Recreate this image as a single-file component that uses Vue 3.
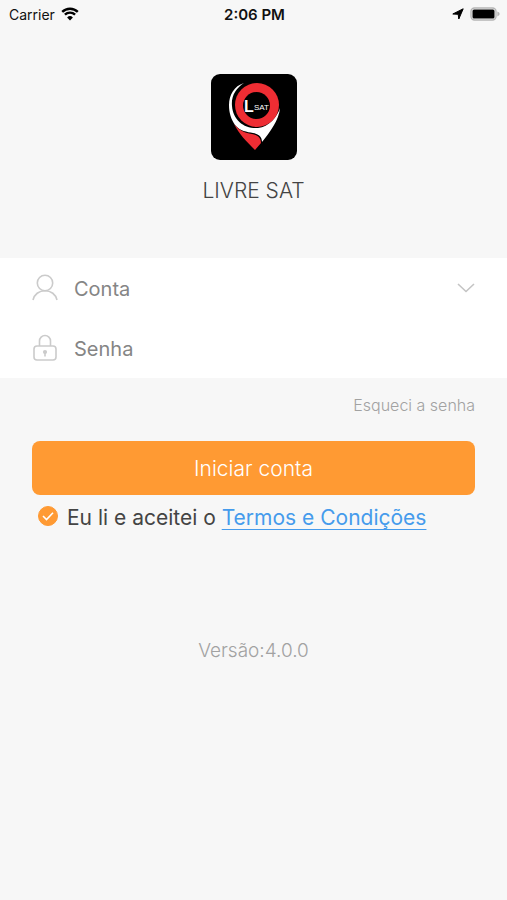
<script setup>
import { ref } from 'vue'

const account = ref('')
const password = ref('')
const accepted = ref(true)
</script>

<template>
  <div class="screen">
    <header class="status">
      <div class="side">
        <span>Carrier</span>
        <svg class="wifi" viewBox="0 0 18 14" aria-hidden="true">
          <path d="M1.2 4.9a11.2 11.2 0 0 1 15.6 0" />
          <path d="M3.9 7.7a7.3 7.3 0 0 1 10.2 0" />
          <path class="dot" d="M9 13.4 6.1 10.4a4.2 4.2 0 0 1 5.8 0z" />
        </svg>
      </div>
      <span class="time">2:06 PM</span>
      <div class="side end">
        <svg class="arrow" viewBox="0 0 12 12" aria-hidden="true">
          <path d="M11.200.8 6.800 11 6.200 6.300.8 6z" />
        </svg>
        <svg class="battery" viewBox="0 0 30 14" aria-hidden="true">
          <rect class="case" x="1" y="1" width="25" height="12" rx="3.5" />
          <rect x="2.500" y="2.500" width="22" height="9" rx="1.500" />
          <path class="cap" d="M27.3 4.6q2.4.9 2.4 2.4t-2.4 2.4z" />
        </svg>
      </div>
    </header>

    <main>
      <section class="brand">
        <svg class="logo" viewBox="0 0 86 86" aria-hidden="true">
          <rect width="86" height="86" rx="9" />
          <path fill="#fff" d="M33 9C23 12 18 21 18 31c0 8 2 14 6 20 5 6 12 7 18 8 6 1 9 4 9 9 8-10 17-22 18-34-3 9-11 19-22 20-14 1-25-8-26-22-1-10 4-18 12-23z" />
          <path fill="#ee2d33" d="M23 50c5 10 12 17 21 26l6-7c0-5-3-8-9-9-7-1-12-3-18-10z" />
          <circle cx="46" cy="31" r="22" fill="#ee2d33" />
          <circle cx="45.500" cy="31.500" r="13.500" />
          <text class="big" x="33" y="38">L</text>
          <text class="small" x="43" y="36">SAT</text>
        </svg>
        <h1>LIVRE SAT</h1>
      </section>

      <form @submit.prevent>
        <div class="fields">
          <div class="row">
            <label for="account" aria-label="Conta">
              <svg class="icon" viewBox="0 0 26 28" aria-hidden="true">
                <circle cx="13" cy="9" r="7.700" />
                <path d="M1 26c1.200-5.600 6-9.300 12-9.300S23.800 20.400 25 26" />
              </svg>
            </label>
            <input id="account" v-model="account" type="text" placeholder="Conta" />
            <button class="more" type="button" aria-label="Contas">
              <svg viewBox="0 0 18 10" aria-hidden="true"><path d="m1 1 8 7.500L17 1" /></svg>
            </button>
          </div>
          <div class="row">
            <label for="password" aria-label="Senha">
              <svg class="icon" viewBox="0 0 26 28" aria-hidden="true">
                <rect x="2" y="12" width="22" height="14" rx="3" />
                <path d="M7.500 12V7a5.500 5.500 0 0 1 11 0v5" />
                <circle class="key" cx="13" cy="18" r="1.300" />
                <path d="M13 19v3.500" />
              </svg>
            </label>
            <input id="password" v-model="password" type="password" placeholder="Senha" />
          </div>
        </div>

        <div class="actions">
          <a class="forgot" href="#">Esqueci a senha</a>
          <button class="login" type="submit">Iniciar conta</button>
          <div class="agree">
            <span class="tick">
              <input id="terms" v-model="accepted" type="checkbox" />
              <svg v-show="accepted" viewBox="0 0 20 20" aria-hidden="true"><path d="m5 10 3.500 3.500 6.500-6.800" /></svg>
            </span>
            <p><label for="terms">Eu li e aceitei o</label> <a href="#">Termos e Condições</a></p>
          </div>
        </div>
      </form>

      <p class="version">Versão:4.0.0</p>
    </main>
  </div>
</template>

<style>
body {
  background: #f7f7f7;
}
</style>

<style scoped>
.screen {
  min-height: 100vh;
  background: #f7f7f7;
  color: #444;
  font-family: Inter, "Liberation Sans", sans-serif;
}
.status {
  display: grid;
  grid-template-columns: 1fr auto 1fr;
  align-items: center;
  height: 28px;
  padding: 0 7px 0 9px;
  color: #111;
  font-size: 14px;
}
.side {
  display: flex;
  align-items: center;
  gap: 6px;
}
.end {
  justify-content: flex-end;
}
.time {
  font-size: 15px;
  font-weight: 600;
}
.wifi {
  width: 18px;
  height: 14px;
  fill: none;
  stroke: #000;
  stroke-width: 2.4;
}
.wifi .dot {
  fill: #000;
  stroke: none;
}
.arrow {
  width: 12px;
  height: 12px;
  stroke: #000;
  stroke-linejoin: round;
}
.battery {
  width: 30px;
  height: 14px;
}
.case {
  fill: #f7f7f7;
  stroke: #b5b5b5;
  stroke-width: 1.4;
}
.cap {
  fill: #b5b5b5;
}
.brand {
  display: flex;
  flex-direction: column;
  align-items: center;
  gap: 16px;
  padding: 46px 0 52px;
}
.logo {
  width: 86px;
  height: 86px;
}
.logo text {
  fill: #fff;
  font-family: "Liberation Sans Narrow", "Liberation Sans", sans-serif;
}
.logo .big {
  font-size: 16px;
  font-weight: 700;
}
.logo .small {
  font-size: 8px;
}
h1 {
  margin: 0;
  font-size: 21px;
  font-weight: 300;
  line-height: 30px;
}
.fields {
  background: #fff;
}
.row {
  display: flex;
  align-items: center;
  height: 60px;
  padding: 0 32px;
}
.row label {
  display: flex;
  margin-right: 16px;
}
.icon {
  width: 26px;
  height: 28px;
  fill: none;
  stroke: #cbcbcb;
  stroke-width: 1.6;
}
.icon .key {
  fill: #cbcbcb;
}
.row input {
  flex: 1;
  min-width: 0;
  height: 40px;
  padding: 2px 0 0;
  border: 0;
  outline: 0;
  background: none;
  color: #444;
  font: 400 20px Inter, "Liberation Sans", sans-serif;
}
.row input::placeholder {
  color: #858585;
  opacity: 1;
}
button {
  border: 0;
  cursor: pointer;
}
.more {
  display: flex;
  padding: 8px 0;
  background: none;
}
.more svg {
  width: 18px;
  height: 10px;
  fill: none;
  stroke: #c4c4c4;
  stroke-width: 1.6;
}
.actions {
  display: flex;
  flex-direction: column;
  padding: 16px 32px 0;
}
.forgot {
  align-self: flex-end;
  color: #a2a2a2;
  font-size: 16px;
  font-weight: 300;
  line-height: 22px;
  text-decoration: none;
}
.login {
  height: 54px;
  margin-top: 25px;
  border-radius: 8px;
  background: #ff9a33;
  color: #fff;
  font: 300 21px Inter, "Liberation Sans", sans-serif;
}
.agree {
  display: flex;
  align-items: center;
  gap: 9px;
  margin-top: 8px;
  padding-left: 6px;
}
.tick {
  display: grid;
  padding-bottom: 4px;
}
.tick input,
.tick svg {
  grid-area: 1 / 1;
  width: 20px;
  height: 20px;
  margin: 0;
}
.tick input {
  appearance: none;
  border: 1px solid #ff9a33;
  border-radius: 50%;
}
.tick input:checked {
  background: #ff9a33;
}
.tick svg {
  fill: none;
  stroke: #fff;
  stroke-width: 1.6;
  pointer-events: none;
}
.agree p {
  margin: 0;
  font-size: 21px;
  line-height: 30px;
}
.agree a {
  color: #459bec;
  text-decoration-thickness: 1px;
  text-underline-offset: 4px;
}
.version {
  margin: 106px 0 0;
  color: #a2a2a2;
  font-size: 19px;
  font-weight: 300;
  line-height: 24px;
  text-align: center;
}
</style>
